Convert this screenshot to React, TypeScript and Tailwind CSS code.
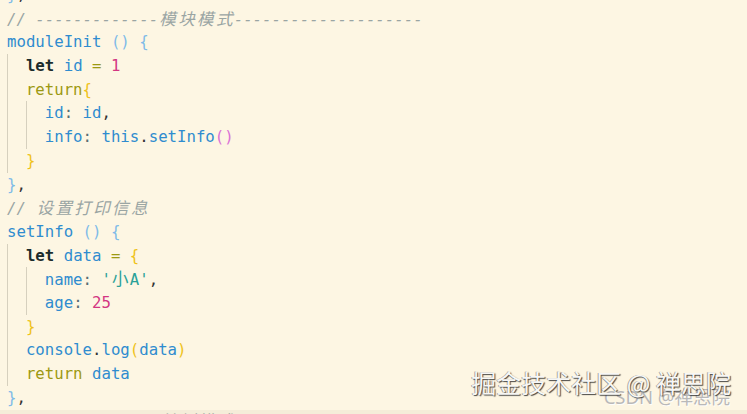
import React from "react";

type Tok = [string, string];

const ID = "text-[#2f8ccf]";
const BR3 = "text-[#7fbbe8]";
const GOLD = "text-[#efc21a]";
const ORC = "text-[#da70d6]";
const NUM = "text-[#d33682]";
const STR = "text-[#2aa198]";
const PUN = "text-[#586e75]";
const COM = "text-[#9aa5a3] italic";
const LET = "text-[#1b2b2b] font-bold";
const KW = "text-[#9c9912]";
const DARK = "text-[#333333]";

type Line = { indent: number; toks: Tok[] };

const CJK_RE = /[\u4e00-\u9fff]/;

function Cjk({ ch }: { ch: string }) {
  return (
    <span className="inline-block w-[18.9px] text-center text-[16.5px] [font-family:'Noto_Sans_CJK_SC','DejaVu_Sans_Mono',monospace]">
      {ch}
    </span>
  );
}

function Text({ text }: { text: string }) {
  const parts: React.ReactNode[] = [];
  let buf = "";
  let k = 0;
  for (const ch of text) {
    if (CJK_RE.test(ch)) {
      if (buf) {
        parts.push(<React.Fragment key={k++}>{buf}</React.Fragment>);
        buf = "";
      }
      parts.push(<Cjk key={k++} ch={ch} />);
    } else {
      buf += ch;
    }
  }
  if (buf) parts.push(<React.Fragment key={k++}>{buf}</React.Fragment>);
  return <>{parts}</>;
}

const lines: Line[] = [
  { indent: 0, toks: [["}", BR3], [",", DARK]] },
  { indent: 0, toks: [["// -------------模块模式--------------------", COM]] },
  { indent: 0, toks: [["moduleInit", ID], [" ", ""], ["()", BR3], [" ", ""], ["{", BR3]] },
  { indent: 1, toks: [["let", LET], [" ", ""], ["id", ID], [" ", ""], ["=", KW], [" ", ""], ["1", NUM]] },
  { indent: 1, toks: [["return", KW], ["{", GOLD]] },
  { indent: 2, toks: [["id", ID], [":", PUN], [" ", ""], ["id", ID], [",", DARK]] },
  { indent: 2, toks: [["info", ID], [":", PUN], [" ", ""], ["this", ID], [".", DARK], ["setInfo", ID], ["()", ORC]] },
  { indent: 1, toks: [["}", GOLD]] },
  { indent: 0, toks: [["}", BR3], [",", DARK]] },
  { indent: 0, toks: [["// 设置打印信息", COM]] },
  { indent: 0, toks: [["setInfo", ID], [" ", ""], ["()", BR3], [" ", ""], ["{", BR3]] },
  { indent: 1, toks: [["let", LET], [" ", ""], ["data", ID], [" ", ""], ["=", KW], [" ", ""], ["{", GOLD]] },
  { indent: 2, toks: [["name", ID], [":", PUN], [" ", ""], ["'小A'", STR], [",", DARK]] },
  { indent: 2, toks: [["age", ID], [":", PUN], [" ", ""], ["25", NUM]] },
  { indent: 1, toks: [["}", GOLD]] },
  { indent: 1, toks: [["console", ID], [".", DARK], ["log", ID], ["(", GOLD], ["data", ID], [")", GOLD]] },
  { indent: 1, toks: [["return", KW], [" ", ""], ["data", ID]] },
  { indent: 0, toks: [["}", BR3], [",", DARK]] },
  { indent: 0, toks: [["// -------------单例模式--------------------", COM]] },
];

function CodeLine({ line }: { line: Line }) {
  const guides = [];
  for (let i = 0; i < line.indent; i++) {
    guides.push(
      <span key={i} className="w-[18.9px] shrink-0 self-stretch border-l border-[#d6d0be]" />
    );
  }
  return (
    <div className="flex h-[23.7px] items-stretch">
      {guides}
      <span className="whitespace-pre leading-[23.7px]">
        {line.toks.map(([t, c], i) => (
          <span key={i} className={c}>
            <Text text={t} />
          </span>
        ))}
      </span>
    </div>
  );
}

export default function App() {
  return (
    <div className="relative h-[414px] w-[747px] overflow-hidden bg-[#fdf6e3]">
      <div className="-mt-[17px] pl-[7px] text-[15.7px] [font-family:'DejaVu_Sans_Mono','Liberation_Mono',monospace]">
        {lines.map((l, i) => (
          <CodeLine key={i} line={l} />
        ))}
      </div>
      <div className="absolute bottom-0 left-0 h-[4px] w-full bg-[#8a7a50]/[0.07]" />
      <div className="absolute right-[17px] top-[388px] whitespace-pre text-[18.5px] leading-none text-[#b9b9b9] [font-family:'Noto_Sans','Noto_Sans_CJK_SC',sans-serif] [text-shadow:1px_1px_0_rgba(255,255,255,0.9)]">
        CSDN @禅思院
      </div>
      <div className="absolute right-[16px] top-[370px] whitespace-pre text-[25px] leading-none text-[#f7f7f5] [font-family:'Noto_Sans_CJK_SC',sans-serif] [text-shadow:1px_1px_1px_rgba(40,40,40,0.85),-1px_0_0_rgba(90,90,90,0.5)]">
        掘金技术社区 @ 禅思院
      </div>
    </div>
  );
}
